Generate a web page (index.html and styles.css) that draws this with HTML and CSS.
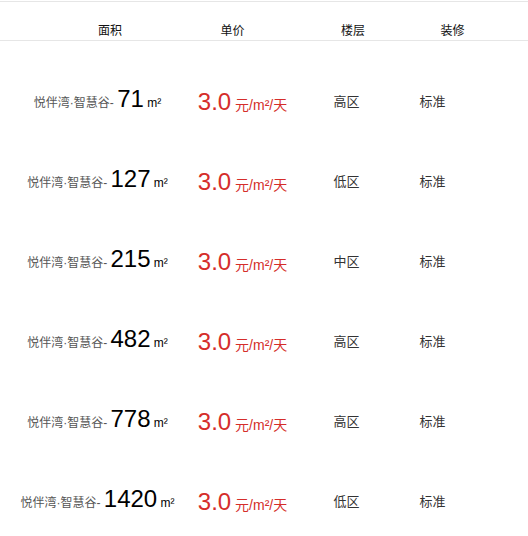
FILE: index.html
```html
<!DOCTYPE html>
<html lang="zh-CN">
<head>
    <meta charset="UTF-8">
    <meta name="viewport" content="width=device-width, initial-scale=1.0">
    <title>房源列表</title>
    <link rel="stylesheet" href="styles.css">
</head>
<body>
    <div class="list-head">
        <span class="h-area">面积</span>
        <span class="h-price">单价</span>
        <span class="h-floor">楼层</span>
        <span class="h-deco">装修</span>
    </div>

    <div class="list-body">
        <div class="row">
            <div class="c-area">悦伴湾·智慧谷- <span class="num">71</span> <span class="unit">m²</span></div>
            <div class="c-price"><span class="big">3.0</span> 元/m²/天</div>
            <div class="c-floor">高区</div>
            <div class="c-deco">标准</div>
        </div>
        <div class="row">
            <div class="c-area">悦伴湾·智慧谷- <span class="num">127</span> <span class="unit">m²</span></div>
            <div class="c-price"><span class="big">3.0</span> 元/m²/天</div>
            <div class="c-floor">低区</div>
            <div class="c-deco">标准</div>
        </div>
        <div class="row">
            <div class="c-area">悦伴湾·智慧谷- <span class="num">215</span> <span class="unit">m²</span></div>
            <div class="c-price"><span class="big">3.0</span> 元/m²/天</div>
            <div class="c-floor">中区</div>
            <div class="c-deco">标准</div>
        </div>
        <div class="row">
            <div class="c-area">悦伴湾·智慧谷- <span class="num">482</span> <span class="unit">m²</span></div>
            <div class="c-price"><span class="big">3.0</span> 元/m²/天</div>
            <div class="c-floor">高区</div>
            <div class="c-deco">标准</div>
        </div>
        <div class="row">
            <div class="c-area">悦伴湾·智慧谷- <span class="num">778</span> <span class="unit">m²</span></div>
            <div class="c-price"><span class="big">3.0</span> 元/m²/天</div>
            <div class="c-floor">高区</div>
            <div class="c-deco">标准</div>
        </div>
        <div class="row">
            <div class="c-area">悦伴湾·智慧谷- <span class="num">1420</span> <span class="unit">m²</span></div>
            <div class="c-price"><span class="big">3.0</span> 元/m²/天</div>
            <div class="c-floor">低区</div>
            <div class="c-deco">标准</div>
        </div>
    </div>
</body>
</html>
```

FILE: styles.css
```css
body {
    margin: 0;
    padding-top: 1px;
    background: #fff;
    font-family: "Liberation Sans", "Noto Sans CJK SC", sans-serif;
    color: #333;
}
.list-head {
    display: grid;
    grid-template-columns: 120px 125px 116px 83px;
    padding: 21px 0 1px 50px;
    border-top: 1px solid #e6e6e6;
    border-bottom: 1px solid #e6e6e6;
    font-size: 12px;
    line-height: 16px;
    color: #111;
    text-align: center;
}
.list-body {
    padding-top: 20px;
}
.row {
    display: grid;
    grid-template-columns: 195px 95px 113px 59px;
    height: 80px;
    align-items: center;
    text-align: center;
}
.c-area {
    font-size: 12px;
    color: #555;
    line-height: 28px;
    white-space: nowrap;
}
.c-area .num {
    font-size: 24px;
    color: #000;
}
.c-area .unit {
    color: #000;
}
.c-price {
    font-size: 14px;
    color: #d52d2a;
    line-height: 28px;
    white-space: nowrap;
    padding-top: 4px;
}
.c-price .big {
    font-size: 24px;
}
.c-floor,
.c-deco {
    font-size: 13px;
    line-height: 18px;
    padding-top: 2px;
}
```
